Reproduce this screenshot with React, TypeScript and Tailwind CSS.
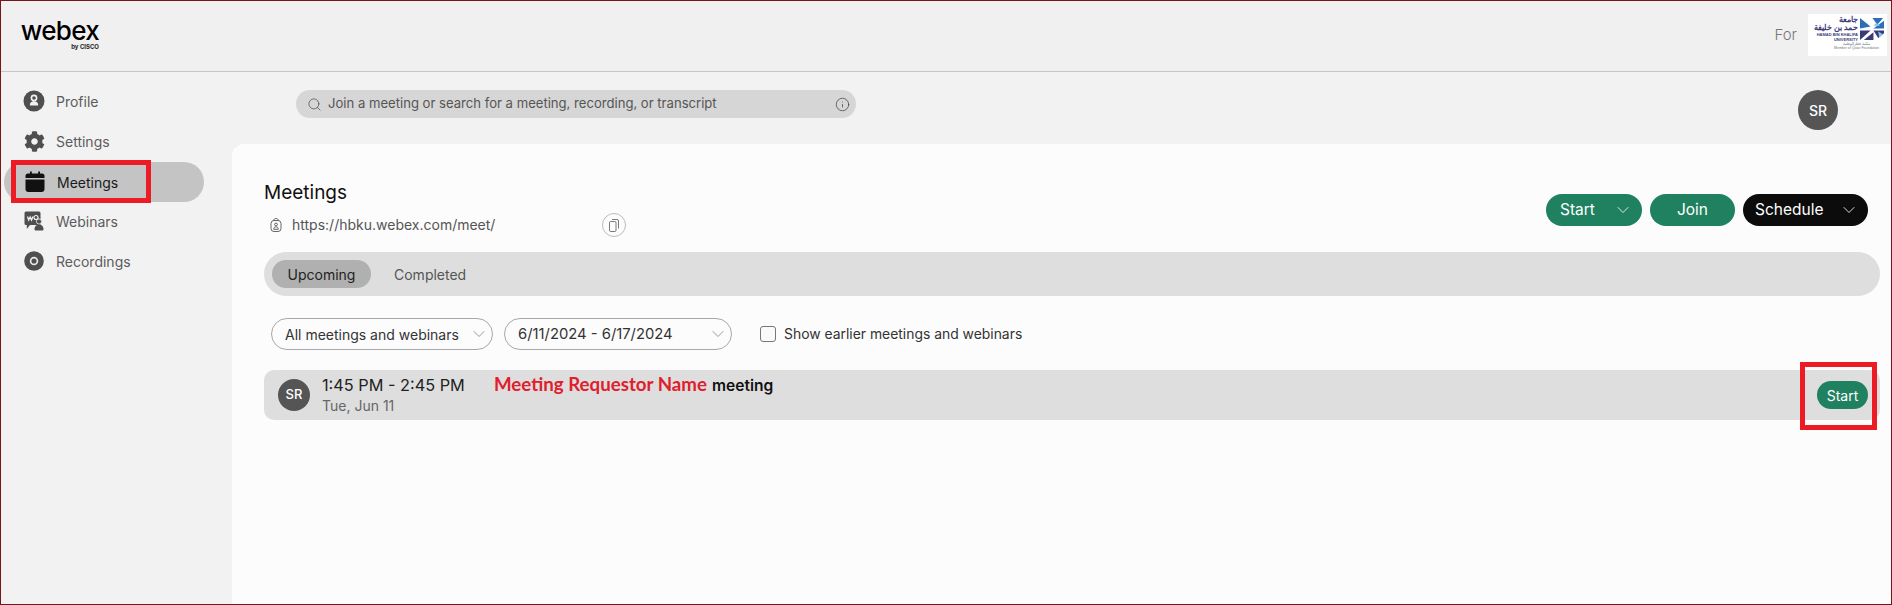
import React from "react";
import { FaCog } from "react-icons/fa";
import { ChevronDown, Search, Info } from "lucide-react";

function ProfileIcon() {
  return (
    <svg width="22" height="22" viewBox="0 0 22 22">
      <circle cx="11" cy="11" r="10.5" fill="#4f4f4f" />
      <circle cx="11" cy="8" r="2.6" fill="none" stroke="#f2f2f2" strokeWidth="1.6" />
      <path d="M6.8 15.5c0-3 1.6-4.2 4.2-4.2s4.2 1.2 4.2 4.2z" fill="#f2f2f2" />
    </svg>
  );
}

function CalendarIcon() {
  return (
    <svg width="20" height="22" viewBox="0 0 20 22">
      <path d="M5 0.5h1.8v3H5zM13.2 0.5H15v3h-1.8z" fill="#111" />
      <path d="M3 2.5h14a2.5 2.5 0 0 1 2.5 2.5v2H.5V5A2.5 2.5 0 0 1 3 2.5z" fill="#111" />
      <path d="M.5 8.5h19V18a3 3 0 0 1-3 3h-13a3 3 0 0 1-3-3z" fill="#111" />
    </svg>
  );
}

function WebinarIcon() {
  return (
    <svg width="20" height="20" viewBox="0 0 20 20">
      <path d="M2 .5h13a1.5 1.5 0 0 1 1.5 1.5v12H6l-3.2 4v-4H2A1.5 1.5 0 0 1 .5 12.5V2A1.5 1.5 0 0 1 2 .5z" fill="#4f4f4f" />
      <path d="M3.5 5.5l1.2 3.5 1.5-3 1.3 3 1.5-3.5" fill="none" stroke="#f2f2f2" strokeWidth="1.3" />
      <circle cx="12" cy="6.5" r="2" fill="none" stroke="#f2f2f2" strokeWidth="1.2" />
      <circle cx="15" cy="10.5" r="2.6" fill="#4f4f4f" stroke="#f2f2f2" strokeWidth="0.8" />
      <path d="M10.5 18.5c0-3.4 2-4.8 4.5-4.8s4.5 1.4 4.5 4.8a1 1 0 0 1-1 1h-7a1 1 0 0 1-1-1z" fill="#4f4f4f" />
    </svg>
  );
}

function RecordingIcon() {
  return (
    <svg width="20" height="20" viewBox="0 0 20 20">
      <circle cx="10" cy="10" r="9.8" fill="#4f4f4f" />
      <circle cx="10" cy="10" r="3.4" fill="none" stroke="#e8e8e8" strokeWidth="1.7" />
    </svg>
  );
}

function LockIcon() {
  return (
    <svg width="12" height="14" viewBox="0 0 12 14" fill="none" stroke="#666" strokeWidth="1">
      <rect x="1" y="2.5" width="10" height="11" rx="3" />
      <path d="M3.5 2.5c.3-1.4 1.2-2 2.5-2s2.2.6 2.5 2" />
      <circle cx="6" cy="6.5" r="1.4" />
      <path d="M3.7 11.3c0-1.6 1-2.5 2.3-2.5s2.3.9 2.3 2.5z" />
    </svg>
  );
}

function CopyIcon() {
  return (
    <svg width="10" height="13" viewBox="0 0 10 13" fill="none" stroke="#555" strokeWidth="0.8">
      <rect x="0.5" y="2.5" width="6.5" height="10" rx="1.2" />
      <path d="M3 .5h5a1.5 1.5 0 0 1 1.5 1.5v7.5" />
    </svg>
  );
}

function HbkuLogo() {
  return (
    <div className="flex h-[42px] w-[79px] flex-col bg-white px-[3px] pt-[2px]">
      <div className="flex items-start justify-end gap-[2px]">
        <div className="flex flex-col items-end font-['Liberation_Sans',sans-serif] text-[#3b3a78]">
          <span className="text-[8px] font-bold leading-[8px]">جامعة</span>
          <span className="whitespace-nowrap text-[8px] font-bold leading-[8px]">حمد بن خليفة</span>
          <span className="whitespace-nowrap text-[4px] font-bold leading-[5px]">HAMAD BIN KHALIFA</span>
          <span className="text-[4px] font-bold leading-[5px]">UNIVERSITY</span>
        </div>
        <svg width="24" height="26" viewBox="0 0 25 25" className="shrink-0">
          <path d="M0 1l11 9-11 2zM13 1h11l-6 7zM25 4v8H14z" fill="#2d6fb5" />
          <path d="M0 14h11L0 24zM14 14h11v3l-6 5zM4 24l10-8v8z" fill="#3b3a78" />
          <path d="M17 6l4 3h-7z" fill="#7fc3e8" />
          <path d="M19 15l5 3-4 3z" fill="#7fc3e8" />
        </svg>
      </div>
      <span className="self-center pl-[18px] font-['Liberation_Sans',sans-serif] text-[3.5px] leading-[4px] text-[#6d7a80]">مكتبة قطر الوطنية</span>
      <span className="self-center whitespace-nowrap pl-[18px] font-['Liberation_Sans',sans-serif] text-[3.5px] leading-[4px] text-[#6d7a80]">Member of Qatar Foundation</span>
    </div>
  );
}

function NavItem({ icon, label, active }: { icon: React.ReactNode; label: string; active?: boolean }) {
  return (
    <div className={active ? "mb-[-1px] mt-[1px] flex h-10 w-[200px] items-center rounded-full bg-[#c4c4c4] pl-[20px] text-[#1a1a1a]" : "flex h-10 w-[200px] items-center pl-[19px] text-[#5c5c5c]"}>
      <div className="flex w-[22px] items-center justify-center">{icon}</div>
      <span className="ml-[11px] text-[14px]">{label}</span>
    </div>
  );
}

function PillSelect({ label, width, size }: { label: string; width: string; size: string }) {
  return (
    <div className={`flex h-8 items-center justify-between whitespace-nowrap rounded-full border border-[#a8a8a8] pl-[13px] pr-[3px] text-[#333] ${width} ${size}`}>
      <span>{label}</span>
      <ChevronDown size={20} strokeWidth={0.9} color="#777" />
    </div>
  );
}

export default function App() {
  return (
    <div className="flex h-[605px] w-full flex-col overflow-hidden border border-[#7b1416] bg-[#f2f2f2] font-['Inter',sans-serif]">
      {/* Header */}
      <div className="flex h-[71px] shrink-0 items-center justify-between border-b border-[#c6c6c6] bg-[#f0f0f0] pl-[20px] pr-[4px]">
        <div className="flex w-[78px] flex-col items-end pb-[3px]">
          <span className="text-[26px] font-medium leading-[24px] tracking-[-0.7px] text-black">webex</span>
          <span className="text-[6px] font-bold leading-[7px] text-[#222]">by CISCO</span>
        </div>
        <div className="flex items-center gap-[11px] pb-[2px]">
          <span className="text-[15px] font-light text-[#777]">For</span>
          <HbkuLogo />
        </div>
      </div>

      <div className="flex min-h-0 flex-1">
        {/* Sidebar */}
        <div className="flex w-[231px] shrink-0 flex-col pl-[3px] pt-[9px]">
          <NavItem icon={<ProfileIcon />} label="Profile" />
          <NavItem icon={<FaCog size={21} color="#4f4f4f" />} label="Settings" />
          <NavItem icon={<CalendarIcon />} label="Meetings" active />
          <NavItem icon={<WebinarIcon />} label="Webinars" />
          <NavItem icon={<RecordingIcon />} label="Recordings" />
        </div>

        <div className="flex min-w-0 flex-1 flex-col">
          {/* Search row */}
          <div className="flex h-[72px] shrink-0 items-start justify-between pl-[64px] pr-[53px] pt-[18px]">
            <div className="flex h-[28px] w-[560px] items-center rounded-full bg-[#d6d6d6] pl-[11px] pr-[6px] text-[13.1px] text-[#555]">
              <Search size={15} strokeWidth={1.1} color="#444" />
              <span className="ml-[6px] flex-1">Join a meeting or search for a meeting, recording, or transcript</span>
              <Info size={15} strokeWidth={1.2} color="#444" />
            </div>
            <div className="flex h-10 w-10 items-center justify-center rounded-full bg-[#555] text-[14px] font-medium text-white">SR</div>
          </div>

          {/* Panel */}
          <div className="flex-1 rounded-tl-[12px] bg-[#fcfcfc] pl-[32px] pr-[11px] pt-[37px]">
            <div className="flex items-start justify-between">
              <div>
                <div className="text-[19px] leading-[24px] text-[#111]">Meetings</div>
                <div className="mt-[8px] flex h-[24px] items-center pl-[6px]">
                  <LockIcon />
                  <span className="mb-[2px] ml-[10px] w-[310px] text-[14px] text-[#555]">https://hbku.webex.com/meet/</span>
                  <div className="flex h-6 w-6 items-center justify-center rounded-full border border-[#bbb]">
                    <CopyIcon />
                  </div>
                </div>
              </div>
              <div className="mr-[12px] mt-[13px] flex gap-[8px] text-[15.5px] text-white">
                <div className="flex h-8 w-[96px] items-center justify-between rounded-full bg-[#1f8160] pl-[14px] pr-[9px]">
                  <span>Start</span>
                  <ChevronDown size={20} strokeWidth={1} />
                </div>
                <div className="flex h-8 w-[85px] items-center justify-center rounded-full bg-[#1f8160]">Join</div>
                <div className="flex h-8 w-[125px] items-center justify-between rounded-full bg-[#0c0c0c] pl-[12px] pr-[9px]">
                  <span>Schedule</span>
                  <ChevronDown size={20} strokeWidth={1} />
                </div>
              </div>
            </div>

            {/* Tabs */}
            <div className="mt-[15px] flex h-[44px] items-center rounded-full bg-[#dedede] pl-[8px] text-[14px]">
              <div className="flex h-7 w-[99px] items-center justify-center rounded-full bg-[#b0b0b0] text-[#222]">Upcoming</div>
              <span className="ml-[23px] text-[#555]">Completed</span>
            </div>

            {/* Filters */}
            <div className="mt-[22px] flex items-center pl-[7px]">
              <PillSelect label="All meetings and webinars" width="w-[222px]" size="text-[14px]" />
              <div className="w-[11px]" />
              <PillSelect label="6/11/2024 - 6/17/2024" width="w-[228px]" size="text-[14.8px]" />
              <div className="ml-[28px] h-[16px] w-[16px] rounded-[3px] border border-[#777] bg-[#fafafa]" />
              <span className="ml-[8px] text-[13.9px] text-[#333]">Show earlier meetings and webinars</span>
            </div>

            {/* Meeting row */}
            <div className="mt-[20px] flex h-[50px] items-center rounded-[10px] bg-[#dedede] pl-[14px] pr-[12px]">
              <div className="flex h-8 w-8 items-center justify-center rounded-full bg-[#555] text-[13px] font-medium text-white">SR</div>
              <div className="ml-[12px] flex w-[172px] flex-col">
                <span className="text-[16.3px] leading-[22px] text-[#222]">1:45 PM - 2:45 PM</span>
                <span className="text-[14px] leading-[20px] text-[#666]">Tue, Jun 11</span>
              </div>
              <div className="mb-[21px] flex items-baseline gap-[5px]">
                <span className="font-['Lato',sans-serif] text-[18.7px] font-bold text-[#e0202c]">Meeting Requestor Name</span>
                <span className="text-[15.6px] font-semibold text-[#111]">meeting</span>
              </div>
              <div className="ml-auto flex h-7 w-[51px] items-center justify-center rounded-full bg-[#1f8160] text-[14px] text-white">Start</div>
            </div>
          </div>
        </div>
      </div>

      {/* Annotation boxes */}
      <div className="absolute left-[11px] top-[160px] h-[43px] w-[140px] border-[5px] border-[#ed1c24]" />
      <div className="absolute left-[1800px] top-[362px] h-[68px] w-[77px] border-[5px] border-[#ed1c24]" />
    </div>
  );
}
